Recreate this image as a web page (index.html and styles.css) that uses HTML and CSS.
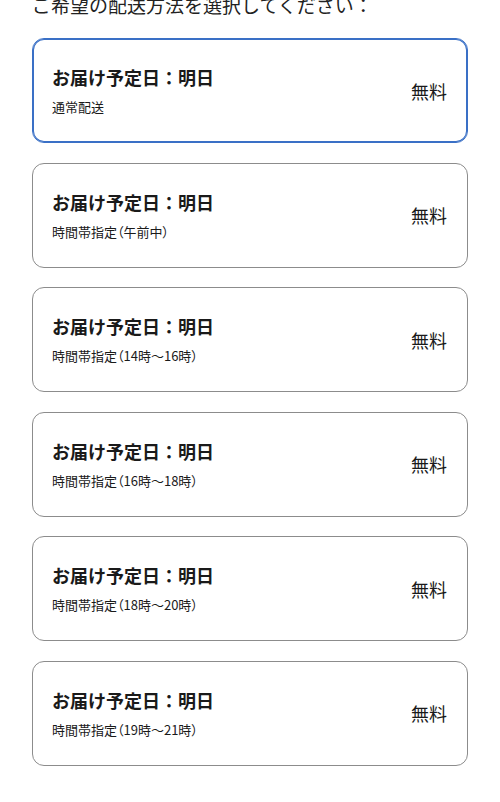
FILE: index.html
```html
<!DOCTYPE html>
<html lang="ja">
<head>
<meta charset="utf-8"/>
<meta content="width=device-width, initial-scale=1.0" name="viewport"/>
<title>配送方法の選択</title>
<link rel="stylesheet" href="styles.css">
</head>
<body>
<main class="shipping">
<p class="shipping-lead">ご希望の配送方法を選択してください：</p>
<ul class="shipping-list">
<li class="shipping-option is-selected">
<div class="shipping-info">
<p class="shipping-date">お届け予定日：明日</p>
<p class="shipping-type">通常配送</p>
</div>
<span class="shipping-price">無料</span>
</li>
<li class="shipping-option">
<div class="shipping-info">
<p class="shipping-date">お届け予定日：明日</p>
<p class="shipping-type">時間帯指定（午前中）</p>
</div>
<span class="shipping-price">無料</span>
</li>
<li class="shipping-option">
<div class="shipping-info">
<p class="shipping-date">お届け予定日：明日</p>
<p class="shipping-type">時間帯指定（14時～16時）</p>
</div>
<span class="shipping-price">無料</span>
</li>
<li class="shipping-option">
<div class="shipping-info">
<p class="shipping-date">お届け予定日：明日</p>
<p class="shipping-type">時間帯指定（16時～18時）</p>
</div>
<span class="shipping-price">無料</span>
</li>
<li class="shipping-option">
<div class="shipping-info">
<p class="shipping-date">お届け予定日：明日</p>
<p class="shipping-type">時間帯指定（18時～20時）</p>
</div>
<span class="shipping-price">無料</span>
</li>
<li class="shipping-option">
<div class="shipping-info">
<p class="shipping-date">お届け予定日：明日</p>
<p class="shipping-type">時間帯指定（19時～21時）</p>
</div>
<span class="shipping-price">無料</span>
</li>
</ul>
</main>
</body>
</html>
```

FILE: styles.css
```css
/* 配送方法の選択 */
body {
    margin: 0;
    font-family: "Noto Sans CJK JP", "Noto Sans", sans-serif;
    background-color: #fff;
    color: #1a1a1a;
    overflow: hidden;
}

.shipping {
    padding: 0 32px;
}

.shipping-lead {
    margin: -9px 0 0;
    font-size: 19px;
    line-height: 28px;
    color: #222;
}

.shipping-list {
    list-style: none;
    margin: 19px 0 0;
    padding: 0;
    display: flex;
    flex-direction: column;
    gap: 19.5px;
}

.shipping-option {
    box-sizing: border-box;
    height: 105px;
    display: flex;
    align-items: center;
    justify-content: space-between;
    padding: 0 20px 0 19px;
    border: 1px solid #8c8c8c;
    border-radius: 12px;
    background-color: #fff;
}

.shipping-option.is-selected {
    border-color: #3a70c6;
    box-shadow: inset 0 0 0 1px #3a70c6;
}

.shipping-info {
    padding-bottom: 1px;
}

.shipping-info p {
    margin: 0;
}

.shipping-date {
    font-size: 18px;
    font-weight: 700;
    line-height: 26px;
}

.shipping-type {
    margin-top: 8px !important;
    font-size: 13px;
    line-height: 18px;
    font-feature-settings: "palt";
}

.shipping-price {
    font-size: 18px;
    line-height: 26px;
}
```
